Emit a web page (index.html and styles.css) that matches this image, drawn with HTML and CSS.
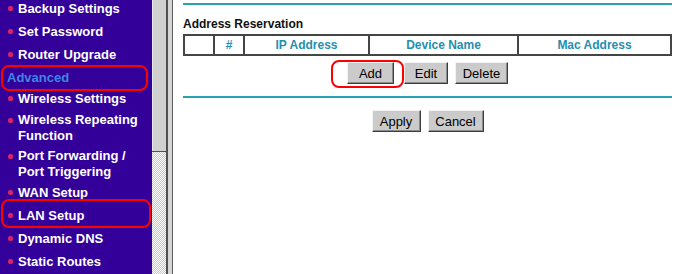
FILE: index.html
```html
<!DOCTYPE html>
<html>
<head>
<meta charset="utf-8">
<link rel="stylesheet" href="styles.css">
</head>
<body>
<div class="frame">
  <nav class="sidebar">
    <ul class="menu">
      <li class="item">Backup Settings</li>
      <li class="item">Set Password</li>
      <li class="item">Router Upgrade</li>
      <li class="heading">Advanced<span class="mark mark-adv"></span></li>
      <li class="item">Wireless Settings</li>
      <li class="item wrap">Wireless Repeating<br>Function</li>
      <li class="item wrap">Port Forwarding /<br>Port Triggering</li>
      <li class="item">WAN Setup</li>
      <li class="item">LAN Setup<span class="mark mark-lan"></span></li>
      <li class="item">Dynamic DNS</li>
      <li class="item">Static Routes</li>
    </ul>
  </nav>
  <div class="scrollbar">
    <div class="thumb"></div>
    <div class="track"></div>
  </div>
  <div class="divider"></div>
  <main class="content">
    <div class="rule rule-top"></div>
    <h3 class="title">Address Reservation</h3>
    <table class="grid">
      <colgroup>
        <col class="c-sel"><col class="c-num"><col class="c-ip"><col class="c-dev"><col class="c-mac">
      </colgroup>
      <tr>
        <th></th>
        <th>#</th>
        <th>IP Address</th>
        <th>Device Name</th>
        <th>Mac Address</th>
      </tr>
    </table>
    <div class="actions">
      <span class="annot"><button class="btn btn-add">Add</button><span class="mark mark-add"></span></span>
      <button class="btn btn-edit">Edit</button>
      <button class="btn btn-del">Delete</button>
    </div>
    <div class="rule rule-mid"></div>
    <div class="actions actions-bottom">
      <button class="btn btn-apply">Apply</button>
      <button class="btn btn-cancel">Cancel</button>
    </div>
  </main>
</div>
</body>
</html>
```

FILE: styles.css
```css
html, body {
  margin: 0;
  padding: 0;
  background: #ffffff;
}

.frame {
  display: flex;
  height: 274px;
  overflow: hidden;
  font-family: "Liberation Sans", Arial, sans-serif;
}

/* ---------- sidebar ---------- */
.sidebar {
  width: 152px;
  flex: none;
  background: #330099;
  overflow: hidden;
}

.menu {
  list-style: none;
  margin: -3px 0 0 0;
  padding: 0;
}

.item,
.heading {
  position: relative;
  font-weight: bold;
  font-size: 13px;
  line-height: 16px;
  white-space: nowrap;
}

.item {
  color: #ffffff;
  padding: 3.5px 0 3.5px 18px;
}

.item::before {
  content: "";
  position: absolute;
  left: 8px;
  top: 9px;
  width: 5px;
  height: 5px;
  border-radius: 50%;
  background: #d4246a;
  box-shadow: 0 0 1px #a01860;
}

.item.wrap {
  padding-top: 2px;
  padding-bottom: 1.5px;
}

.item.wrap::before {
  top: 8px;
}

.heading {
  color: #3f86e6;
  padding: 3.5px 0 1.5px 7px;
}

.mark {
  position: absolute;
  border: 2px solid #ff0000;
  border-radius: 8px;
  pointer-events: none;
}

.mark-adv {
  left: 1px;
  right: 4px;
  top: -1.5px;
  bottom: -3.5px;
}

.mark-lan {
  left: 1px;
  right: 1px;
  top: -5px;
  bottom: -1px;
}

/* ---------- scrollbar ---------- */
.scrollbar {
  width: 16px;
  flex: none;
  display: flex;
  flex-direction: column;
}

.thumb {
  height: 152px;
  box-sizing: border-box;
  background: #d0d0d0;
  border-right: 2px solid #505050;
  border-bottom: 1px solid #505050;
  box-shadow: inset 1px 0 #e8e8e8;
}

.track {
  flex: 1;
  background-color: #ffffff;
  background-image: conic-gradient(#c4c4c4 25%, #ffffff 0 50%, #c4c4c4 0 75%, #ffffff 0);
  background-size: 2px 2px;
  border-right: 2px solid #505050;
  box-sizing: border-box;
}

.divider {
  width: 4px;
  flex: none;
  background: #d6d6d6;
  border-right: 1px solid #5a5a5a;
}

/* ---------- content ---------- */
.content {
  flex: 1;
  padding: 3px 28px 0 10px;
}

.rule {
  height: 2px;
  background: #27a2b2;
}

.title {
  margin: 12px 0 0 0;
  font-size: 12px;
  line-height: 14px;
  font-weight: bold;
  color: #111111;
}

.grid {
  margin-top: 3px;
  width: 487px;
  table-layout: fixed;
  border-collapse: collapse;
}

.c-sel { width: 30px; }
.c-num { width: 30px; }
.c-ip { width: 125px; }
.c-dev { width: 149px; }
.c-mac { width: 153px; }

.grid th {
  border: 2px solid #454545;
  padding: 0;
  height: 18px;
  line-height: 18px;
  font-size: 12px;
  font-weight: bold;
  color: #1f8fb3;
  text-align: center;
}

.actions {
  display: flex;
  justify-content: center;
  align-items: center;
  gap: 7px;
  margin-top: 6px;
}

.annot {
  position: relative;
  display: inline-flex;
  margin-right: 3px;
}

.mark-add {
  left: -16px;
  right: -10px;
  top: -2px;
  bottom: -4px;
}

.btn {
  box-sizing: border-box;
  height: 22px;
  padding: 0;
  font-family: "Liberation Sans", Arial, sans-serif;
  font-size: 13px;
  color: #000000;
  background: #cbcbcb;
  border: 1px solid;
  border-color: #f2f2f2 #3c3c3c #3c3c3c #f2f2f2;
  box-shadow: inset -1px -1px #8c8c8c;
  border-radius: 0;
}

.btn-add { width: 47px; }
.btn-edit { width: 44px; }
.btn-del { width: 53px; }
.btn-apply { width: 49px; }
.btn-cancel { width: 56px; }

.rule-mid {
  margin-top: 12px;
}

.actions-bottom {
  margin-top: 12px;
}
```
